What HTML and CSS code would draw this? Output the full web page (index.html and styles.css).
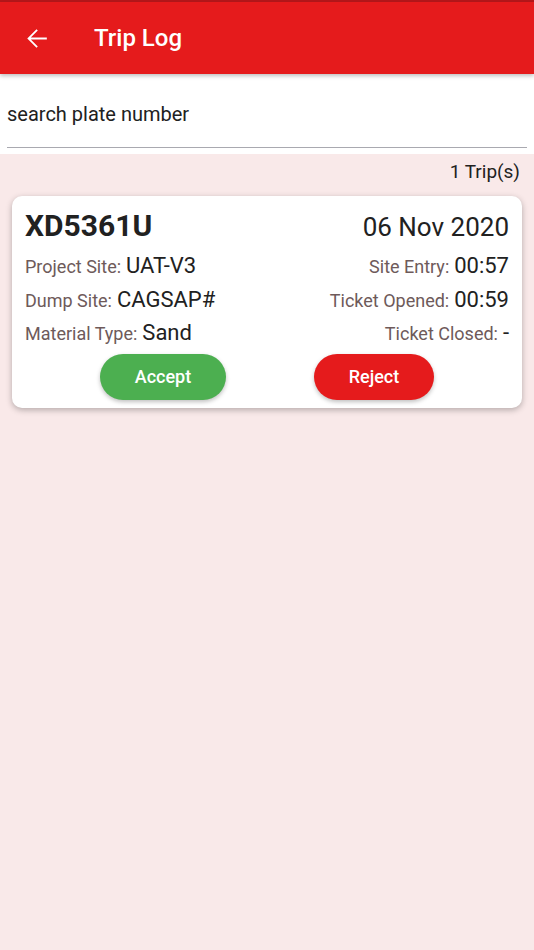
FILE: index.html
```html
<!DOCTYPE html>
<html lang="en">

<head>
    <meta charset="UTF-8">
    <meta name="viewport" content="width=device-width, initial-scale=1.0">
    <title>Trip Log</title>
    <link rel="stylesheet" href="styles.css">
</head>

<body>
    <div class="status-strip"></div>
    <header class="app-bar">
        <button class="back-btn" aria-label="Back">
            <svg viewBox="0 0 24 24" width="31" height="31">
                <path d="M20 11.25H7.6l5.4-5.4-1-1L4.85 12 12 19.15l1-1-5.4-5.4H20z" fill="#fff" />
            </svg>
        </button>
        <h1 class="title">Trip Log</h1>
    </header>

    <div class="search-box">
        <input type="text" class="search-input" placeholder="search plate number">
    </div>

    <div class="trip-count">1 Trip(s)</div>

    <div class="card">
        <div class="card-head">
            <span class="plate">XD5361U</span>
            <span class="date">06 Nov 2020</span>
        </div>
        <div class="card-row">
            <span><span class="label">Project Site:</span> <span class="value">UAT-V3</span></span>
            <span><span class="label">Site Entry:</span> <span class="value">00:57</span></span>
        </div>
        <div class="card-row">
            <span><span class="label">Dump Site:</span> <span class="value">CAGSAP#</span></span>
            <span><span class="label">Ticket Opened:</span> <span class="value">00:59</span></span>
        </div>
        <div class="card-row">
            <span><span class="label">Material Type:</span> <span class="value">Sand</span></span>
            <span><span class="label">Ticket Closed:</span> <span class="value">-</span></span>
        </div>
        <div class="actions">
            <button class="btn btn-accept">Accept</button>
            <button class="btn btn-reject">Reject</button>
        </div>
    </div>
</body>

</html>
```

FILE: styles.css
```css
body {
    margin: 0;
    width: 534px;
    min-height: 950px;
    background: #f9e9e9;
    font-family: Roboto, "Liberation Sans", sans-serif;
    color: #212121;
}

.status-strip {
    height: 2px;
    background: #b5171a;
}

.app-bar {
    height: 72px;
    background: #e51b1c;
    display: flex;
    align-items: center;
    box-shadow: 0 2px 4px rgba(0, 0, 0, 0.25);
    position: relative;
    z-index: 1;
}

.back-btn {
    background: none;
    border: none;
    padding: 0;
    margin-left: 21px;
    width: 31px;
    height: 31px;
    display: flex;
}

.title {
    margin: 0 0 0 42px;
    color: #fff;
    font-size: 24px;
    font-weight: 500;
}

.search-box {
    background: #fff;
    height: 80px;
    padding: 0 7px;
    box-sizing: border-box;
    display: flex;
    align-items: flex-end;
}

.search-input {
    width: 100%;
    border: none;
    border-bottom: 1px solid #a9a9b0;
    outline: none;
    font-family: inherit;
    font-size: 20px;
    padding: 20px 0 21px 0;
    margin-bottom: 6px;
    background: transparent;
}

.search-input::placeholder {
    color: #212121;
}

.trip-count {
    text-align: right;
    font-size: 19px;
    padding: 5px 14px 0 0;
    line-height: 26px;
}

.card {
    margin: 11px 12px 0 12px;
    background: #fff;
    border-radius: 10px;
    box-shadow: 0 2px 6px rgba(0, 0, 0, 0.28);
    padding: 12px 0 8px 0;
}

.card-head {
    display: flex;
    justify-content: space-between;
    align-items: baseline;
    padding: 0 13px;
    line-height: 36px;
}

.plate {
    font-size: 30px;
    font-weight: 700;
}

.date {
    font-size: 26px;
}

.card-row {
    display: flex;
    justify-content: space-between;
    align-items: baseline;
    padding: 0 13px;
    height: 33.5px;
    line-height: 1;
}

.card-head + .card-row {
    margin-top: 10px;
}

.label {
    font-size: 18px;
    color: #6e5a5a;
    margin-right: 1px;
}

.value {
    font-size: 22px;
}

.actions {
    display: flex;
    justify-content: space-evenly;
    margin-top: -2px;
}

.btn {
    height: 46px;
    border: none;
    border-radius: 23px;
    color: #fff;
    font-family: inherit;
    font-size: 18px;
    font-weight: 500;
    box-shadow: 0 2px 4px rgba(0, 0, 0, 0.25);
}

.btn-accept {
    width: 126px;
    background: #4caf50;
}

.btn-reject {
    width: 120px;
    background: #e51b1c;
}
```
